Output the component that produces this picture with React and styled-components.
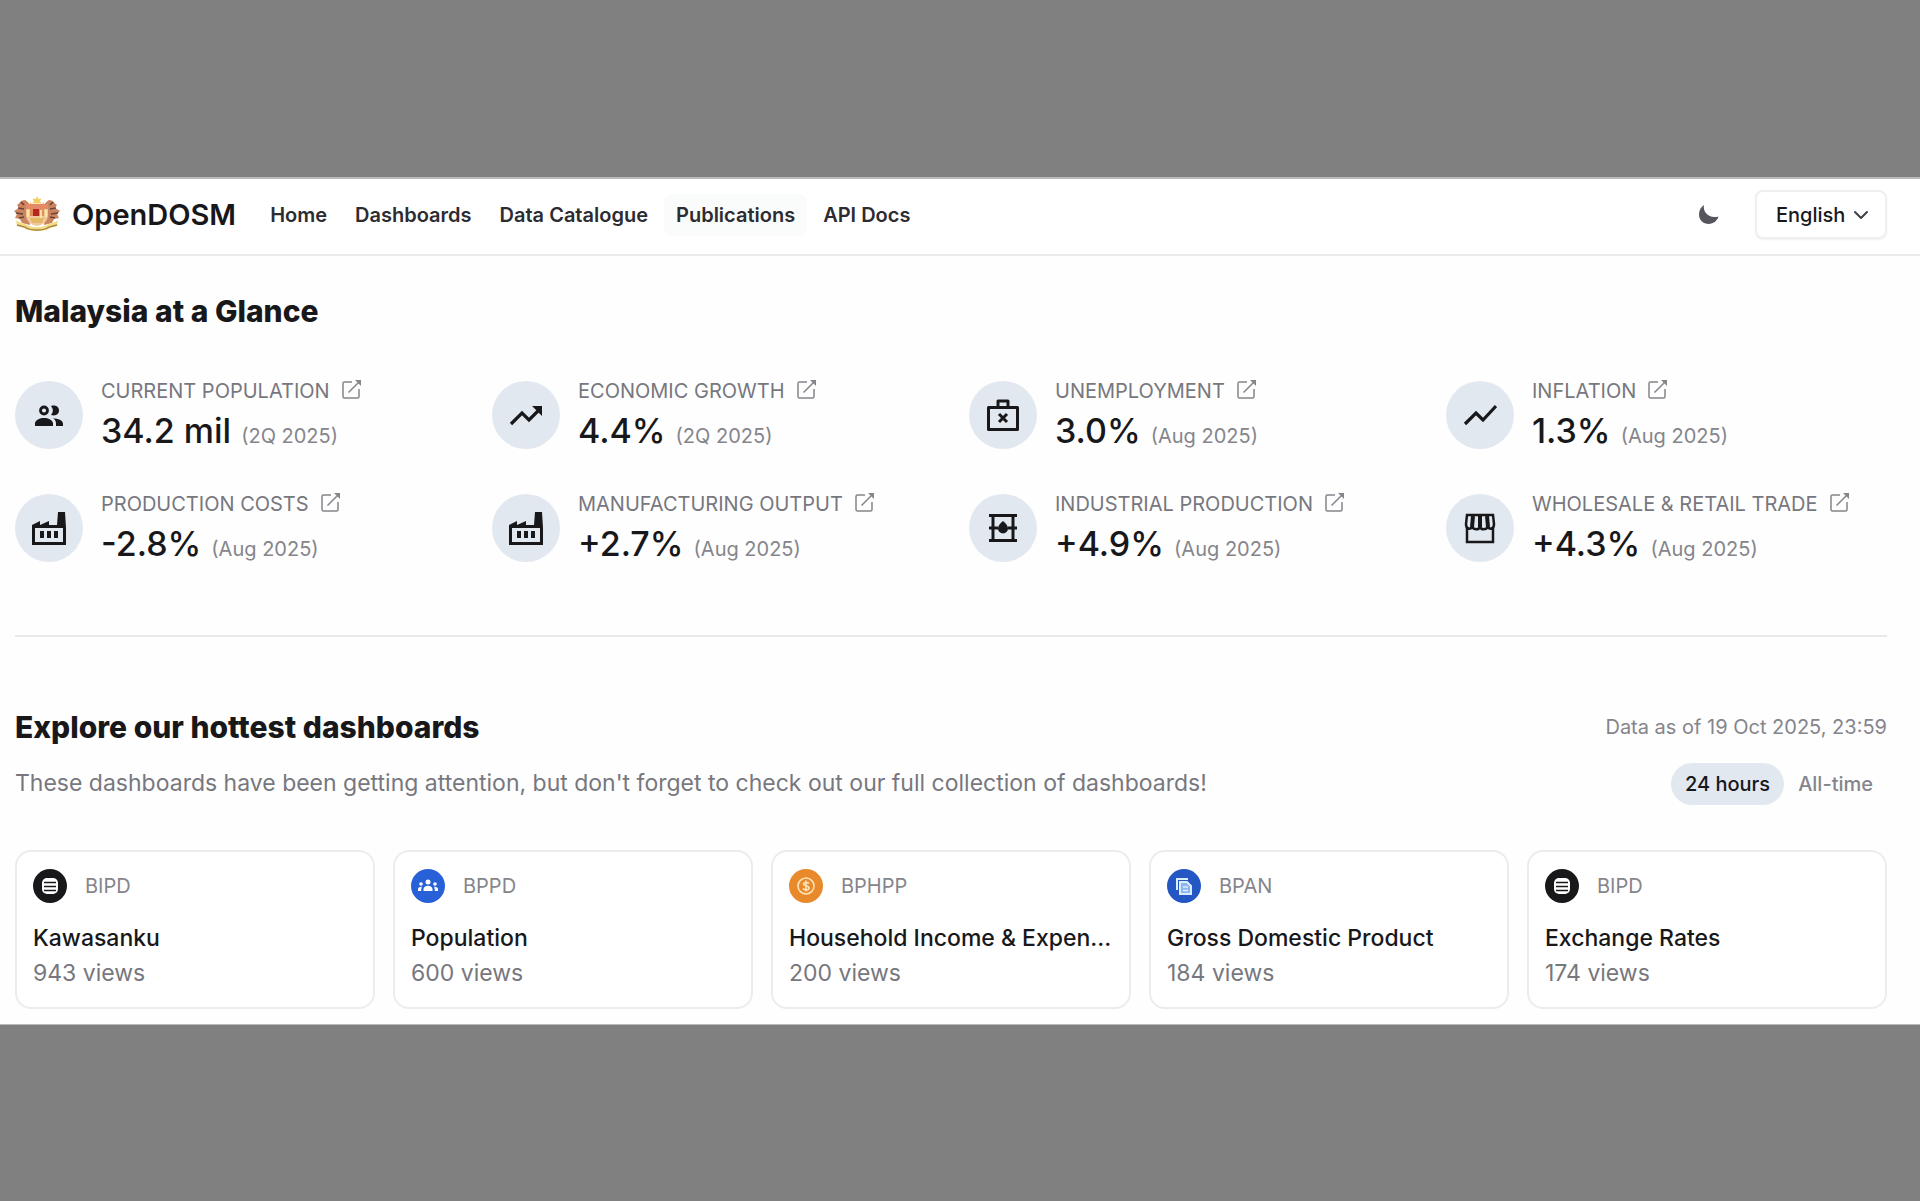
import { useState } from "react";
import styled, { createGlobalStyle } from "styled-components";


const GlobalStyle = createGlobalStyle`
    * {
        box-sizing: border-box;
    }
    body {
        margin: 0;
        background-color: #808080;
        font-family: Inter, "Liberation Sans", sans-serif;
        color: #18181b;
    }
    h1, h2, p, dl, dt, dd {
        margin: 0;
    }
    a {
        color: inherit;
        text-decoration: none;
    }
    button, select {
        font-family: inherit;
        color: inherit;
    }
`

const Stage = styled.div`
    padding: 177px 0;
`

const Page = styled.div`
    background-color: #fefefe;
    border-top: 2px solid #bababa;
    border-bottom: 1px solid #bababa;
`

const Header = styled.header`
    display: flex;
    align-items: center;
    height: 77px;
    padding: 0 33px 4px 13px;
    border-bottom: 2px solid #ebebeb;
    background-color: white;
`

const Brand = styled.a`
    display: flex;
    align-items: center;
    gap: 11px;
    margin-right: 22px;
    font-size: 29px;
    font-weight: 600;
`

const Nav = styled.nav`
    display: flex;
    gap: 4px;
    flex: 1;
`

const NavLink = styled.a`
    padding: 0 12px;
    border-radius: 8px;
    font-size: 20px;
    font-weight: 600;
    line-height: 42px;
    color: #2c2c31;
    background-color: ${(props) => (props.$active ? "#fafbfb" : "transparent")};
`

const ThemeButton = styled.button`
    display: flex;
    margin-right: 36px;
    padding: 0;
    border: none;
    background: none;
    color: #55555c;
    cursor: pointer;
`

const Language = styled.div`
    position: relative;
    display: flex;
    align-items: center;
    svg {
        position: absolute;
        right: 18px;
        pointer-events: none;
    }
`

const LanguageSelect = styled.select`
    appearance: none;
    height: 49px;
    padding: 0 39px 0 19px;
    border: 2px solid #efeff0;
    border-radius: 8px;
    background-color: white;
    font-size: 20px;
    font-weight: 500;
    box-shadow: 0 1px 2px rgba(0, 0, 0, 0.06);
`

const Section = styled.section`
    margin: 0 33px 0 15px;
    padding-top: ${(props) => props.$top};
`

const Title = styled.h2`
    font-size: 30px;
    font-weight: 800;
    line-height: 36px;
`

const StatGrid = styled.dl`
    display: grid;
    grid-template-columns: repeat(4, 1fr);
    gap: 41px 36px;
    margin-top: 50px;
    padding-bottom: 71px;
    border-bottom: 2px solid #e9e9eb;
`

const Stat = styled.div`
    display: flex;
    align-items: center;
    gap: 18px;
    height: 72px;
    white-space: nowrap;
`

const StatIcon = styled.span`
    display: flex;
    align-items: center;
    justify-content: center;
    flex-shrink: 0;
    width: 68px;
    height: 68px;
    border-radius: 50%;
    background-color: #e2e8f0;
`

const StatText = styled.div`
    padding-top: 4px;
`

const StatLabel = styled.dt`
    font-size: 20px;
    line-height: 28px;
    color: #77777e;
    text-transform: uppercase;
    a {
        display: flex;
        align-items: center;
        gap: 12px;
    }
    svg {
        margin-bottom: 4px;
    }
`

const StatValue = styled.dd`
    display: flex;
    align-items: baseline;
    gap: 10px;
    margin-top: 4px;
    font-size: 34px;
    font-weight: 500;
    line-height: 44px;
`

const Period = styled.span`
    font-size: 20px;
    font-weight: 400;
    color: #85858b;
`

const SectionRow = styled.div`
    display: flex;
    align-items: center;
    justify-content: space-between;
    margin-bottom: ${(props) => props.$gap};
`

const Description = styled.p`
    padding-bottom: 2px;
    font-size: 23px;
    line-height: 34px;
    color: #77777e;
`

const Updated = styled.p`
    font-size: 20px;
    color: #85858b;
`

const Tabs = styled.div`
    display: flex;
`

const Tab = styled.button`
    height: 42px;
    padding: 0 14px;
    border: none;
    border-radius: 21px;
    font-size: 20px;
    font-weight: 500;
    background-color: ${(props) => (props.$active ? "#e2e8f0" : "transparent")};
    color: ${(props) => (props.$active ? "#18181b" : "#85858b")};
    cursor: pointer;
`

const CardGrid = styled.div`
    display: grid;
    grid-template-columns: repeat(5, minmax(0, 1fr));
    gap: 18px;
    padding-bottom: 15px;
`

const Card = styled.a`
    display: block;
    padding: 17px 14px 17px 16px;
    border: 2px solid #ececee;
    border-radius: 16px;
    background-color: white;
`

const Agency = styled.div`
    display: flex;
    align-items: center;
    gap: 18px;
    margin-bottom: 17px;
    font-size: 20px;
    line-height: 34px;
    color: #85858b;
`

const CardTitle = styled.div`
    overflow: hidden;
    font-size: 23px;
    font-weight: 500;
    line-height: 36px;
    white-space: nowrap;
    text-overflow: ellipsis;
`

const Views = styled.div`
    font-size: 23px;
    line-height: 34px;
    color: #77777e;
`


// coat of arms: two tigers holding the shield over a ribbon
const Crest = () => (
    <svg width="48" height="38" viewBox="0 0 48 38" aria-hidden="true">
        <path d="M24 0l1.4 3 3.2-.6-1.6 2.8 2 2.4H19l2-2.4-1.6-2.8 3.2.6z" fill="#f2cf63" />
        <path d="M17 6c2 4 12 4 14 0 0 5-3 7-7 7s-7-2-7-7z" fill="#f0b64b" />
        <path d="M12 4c-4 0-5 3-8 5l2 3-5 3 3 3-2 4 5 1 2 4 8 2-1-9 2-9c-1-3-3-5-6-7z" fill="#cb8460" />
        <path d="M36 4c4 0 5 3 8 5l-2 3 5 3-3 3 2 4-5 1-2 4-8 2 1-9-2-9c1-3 3-5 6-7z" fill="#cb8460" />
        <path d="M8 6l3 3M5 12l6 1M3 17l7 1M6 22l5-1M40 6l-3 3M43 12l-6 1M45 17l-7 1M42 22l-5-1" stroke="#6f4038" strokeWidth="1.6" />
        <path d="M13 8h22v11c0 6-5 10-11 11-6-1-11-5-11-11z" fill="#f3c79c" />
        <path d="M13 8h22v5H13z" fill="#e58a68" />
        <path d="M17 13h14v7H17z" fill="#e28d5c" />
        <path d="M20 13h6v7h-6z" fill="#b5271f" />
        <path d="M15 14v7M33 14v7M28 14v8" stroke="#fae6a0" strokeWidth="2" />
        <path d="M17 22h14l-2 5H19z" fill="#e3b765" />
        <path d="M3 24c3 3 8 3 11 5 6 3 14 3 20 0 3-2 8-2 11-5l-1 6-7 2c-3 4-23 4-26 0l-7-2z" fill="#f3dc83" />
        <path d="M4 29l8 2c5 4 19 4 24 0l8-2" fill="none" stroke="#a58543" strokeWidth="1.3" />
    </svg>
)

const MoonIcon = () => (
    <svg width="21" height="21" viewBox="0 0 21 21" aria-hidden="true">
        <path d="M6 1c-1.500 7 5 14 14.500 11.500A10 9.500 0 0 1 11 20C5 20 1 16 1 10.500 1 6 3 3 6 1z" fill="currentColor" />
    </svg>
)

const ChevronIcon = () => (
    <svg width="16" height="10" viewBox="0 0 16 10" fill="none" aria-hidden="true">
        <path d="M2 2l6 6 6-6" stroke="#3f3f46" strokeWidth="2" strokeLinecap="round" strokeLinejoin="round" />
    </svg>
)

const LinkIcon = () => (
    <svg width="20" height="20" viewBox="0 0 20 20" fill="none" stroke="#85858b" strokeWidth="1.5" aria-hidden="true">
        <path d="M10 3H2.500a1.500 1.500 0 0 0-1.500 1.500v13A1.500 1.500 0 0 0 2.500 19h13a1.500 1.500 0 0 0 1.500-1.500V10M6.500 13.500L18 2" />
        <path d="M13 1h6v6z" fill="#85858b" stroke="none" />
    </svg>
)

const shapes = {
    people: (
        <>
            <circle cx="12" cy="12.500" r="3.500" fill="none" stroke="currentColor" strokeWidth="2.800" />
            <path d="M19 8c5-1.500 8 1 8 4.500S24 18.500 19 17c2.500-3 2.500-6 0-9z" />
            <path d="M3 28v-2.500C3 22 8 20 12 20s9 2 9 5.500V28zM21 20.200c5 .2 10 2.300 10 5.300V28h-7v-2.500c0-2.200-1-4-3-5.300z" />
        </>
    ),
    rising: (
        <>
            <path d="M2 26l11-11 7 7L30 12" fill="none" stroke="currentColor" strokeWidth="3.200" />
            <path d="M23 8h10v10z" />
        </>
    ),
    line: <path d="M2 26l11-11 7 7L33 8" fill="none" stroke="currentColor" strokeWidth="3.200" />,
    jobless: (
        <g fill="none" stroke="currentColor" strokeWidth="3">
            <path d="M2.500 9.500h29v22h-29zM12 9V3h10v6" strokeLinejoin="round" />
            <path d="M13 16l8 8M21 16l-8 8" />
        </g>
    ),
    factory: (
        <>
            <path fillRule="evenodd" d="M0 14l8-4v4l9-4v4h8L26 1h7l1 16v17H0zM3 17v14h28V17z" />
            <path d="M8 20h4v7H8zM15 20h4v7h-4zM22 20h4v7h-4z" />
        </>
    ),
    barrel: (
        <>
            <path d="M3 3h28v3H3zM3 15.500h9v3H3zM22 15.500h9v3h-9zM3 28h28v3H3zM5.500 4h3v26h-3zM25.500 4h3v26h-3z" />
            <path d="M17 10c3.500 3 5 5 5 7.500a5 5 0 0 1-10 0c0-2.500 1.500-4.500 5-7.500z" />
        </>
    ),
    shop: (
        <g fill="none" stroke="currentColor" strokeWidth="2.500">
            <path d="M4 4h26l1 9c0 5-4 6-6 3-2 3-7 3-8 0-1 3-6 3-8 0-2 3-6 2-6-3z" fill="#e2e8f0" />
            <path d="M10 5L9 16M17 5v11M24 5l1 11" strokeWidth="4" />
            <path d="M4 16v15h26V16" />
        </g>
    ),
}

const badges = {
    BIPD: {
        color: "#18181b",
        glyph: (
            <>
                <rect x="9" y="9" width="16" height="16" rx="5" fill="#fff" />
                <path d="M11 13.500h12M11 17.500h12M11 21.500h12" stroke="#18181b" strokeWidth="1.700" />
            </>
        ),
    },
    BPPD: {
        color: "#2860d8",
        glyph: (
            <g fill="#fff">
                <circle cx="17" cy="13" r="2.500" />
                <circle cx="10" cy="15" r="1.800" />
                <circle cx="24" cy="15" r="1.800" />
                <path d="M12.500 22v-2c0-2 2-3.300 4.500-3.300s4.500 1.300 4.500 3.300v2zM7 22v-2c0-1.500 1.500-2.500 4-2.300-.6 1-.8 2-.8 4.300zM27 22v-2c0-1.500-1.500-2.500-4-2.300.6 1 .8 2 .8 4.300z" />
            </g>
        ),
    },
    BPHPP: {
        color: "#e8892c",
        glyph: (
            <g fill="none" stroke="#ffe3b5" strokeWidth="1.600">
                <circle cx="17" cy="17" r="8" />
                <path d="M20 14.500c-1-1.500-5.500-1.500-5.500.5s5.500 1.500 5.500 4-5 2.300-6 .5M17 11.500v11" />
            </g>
        ),
    },
    BPAN: {
        color: "#2456c4",
        glyph: (
            <g fill="none" stroke="#dcecff" strokeWidth="2">
                <path d="M10 21V10h11" />
                <path d="M13 13h7l4 4v8H13z" fill="#8db6ef" />
                <path d="M16 18h5M16 21.500h5" strokeWidth="1.400" />
            </g>
        ),
    },
}

const links = ["Home", "Dashboards", "Data Catalogue", "Publications", "API Docs"]

const stats = [
    { label: "Current Population", value: "34.2 mil", period: "2Q 2025", icon: "people" },
    { label: "Economic Growth", value: "4.4%", period: "2Q 2025", icon: "rising" },
    { label: "Unemployment", value: "3.0%", period: "Aug 2025", icon: "jobless" },
    { label: "Inflation", value: "1.3%", period: "Aug 2025", icon: "line" },
    { label: "Production Costs", value: "-2.8%", period: "Aug 2025", icon: "factory" },
    { label: "Manufacturing Output", value: "+2.7%", period: "Aug 2025", icon: "factory" },
    { label: "Industrial Production", value: "+4.9%", period: "Aug 2025", icon: "barrel" },
    { label: "Wholesale & Retail Trade", value: "+4.3%", period: "Aug 2025", icon: "shop" },
]

const dashboards = [
    { agency: "BIPD", title: "Kawasanku", views: 943 },
    { agency: "BPPD", title: "Population", views: 600 },
    { agency: "BPHPP", title: "Household Income & Expen...", views: 200 },
    { agency: "BPAN", title: "Gross Domestic Product", views: 184 },
    { agency: "BIPD", title: "Exchange Rates", views: 174 },
]

const StatItem = ({ item }) => (
    <Stat>
        <StatIcon>
            <svg width="34" height="34" viewBox="0 0 34 34" fill="currentColor" aria-hidden="true">
                {shapes[item.icon]}
            </svg>
        </StatIcon>
        <StatText>
            <StatLabel>
                <a href="#">{item.label}<LinkIcon /></a>
            </StatLabel>
            <StatValue>
                {item.value}
                <Period>({item.period})</Period>
            </StatValue>
        </StatText>
    </Stat>
)

const DashboardCard = ({ item }) => (
    <Card href="#">
        <Agency>
            <svg width="34" height="34" viewBox="0 0 34 34" aria-hidden="true">
                <circle cx="17" cy="17" r="17" fill={badges[item.agency].color} />
                {badges[item.agency].glyph}
            </svg>
            {item.agency}
        </Agency>
        <CardTitle>{item.title}</CardTitle>
        <Views>{item.views} views</Views>
    </Card>
)

const App = () => {

    const [range, setRange] = useState("24 hours");

    return (
        <Stage>
            <GlobalStyle />
            <Page>
                <Header>
                    <Brand href="#">
                        <Crest />
                        OpenDOSM
                    </Brand>
                    <Nav>
                        {links.map(link => (
                            <NavLink href="#" key={link} $active={link === "Publications"}>{link}</NavLink>
                        ))}
                    </Nav>
                    <ThemeButton aria-label="Dark mode"><MoonIcon /></ThemeButton>
                    <Language>
                        <LanguageSelect aria-label="Language">
                            <option>English</option>
                        </LanguageSelect>
                        <ChevronIcon />
                    </Language>
                </Header>
                <main>
                    <Section $top="37px">
                        <Title>Malaysia at a Glance</Title>
                        <StatGrid>
                            {stats.map(item => (
                                <StatItem item={item} key={item.label} />
                            ))}
                        </StatGrid>
                    </Section>
                    <Section $top="72px">
                        <SectionRow $gap="18px">
                            <Title>Explore our hottest dashboards</Title>
                            <Updated>Data as of 19 Oct 2025, 23:59</Updated>
                        </SectionRow>
                        <SectionRow $gap="45px">
                            <Description>These dashboards have been getting attention, but don't forget to check out our full collection of dashboards!</Description>
                            <Tabs role="tablist">
                                {["24 hours", "All-time"].map(name => (
                                    <Tab
                                        key={name}
                                        role="tab"
                                        aria-selected={range === name}
                                        $active={range === name}
                                        onClick={() => setRange(name)}
                                    >
                                        {name}
                                    </Tab>
                                ))}
                            </Tabs>
                        </SectionRow>
                        <CardGrid>
                            {dashboards.map(item => (
                                <DashboardCard item={item} key={item.title} />
                            ))}
                        </CardGrid>
                    </Section>
                </main>
            </Page>
        </Stage>
    )
}

export default App
